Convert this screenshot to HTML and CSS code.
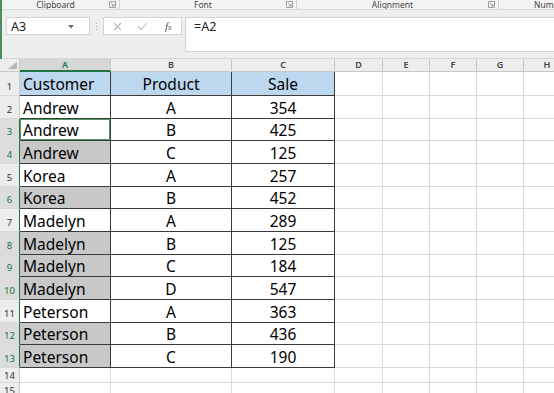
FILE: index.html
```html
<!DOCTYPE html>
<html>
<head>
<meta charset="utf-8">
<link rel="stylesheet" href="styles.css">
</head>
<body>
<div class="top">
  <div class="ribbon">
    <div class="grp g1"><span class="glabel">Clipboard</span><span class="launch"><svg width="7" height="7" viewBox="0 0 7 7"><path d="M0.5 0.5h6v6h-6z" fill="none" stroke="#8a8a8a" stroke-width="0.8"/><path d="M2 2l3 3M5 3v2H3" fill="none" stroke="#8a8a8a" stroke-width="0.8"/></svg></span></div>
    <div class="grp g2"><span class="glabel">Font</span><span class="launch"><svg width="7" height="7" viewBox="0 0 7 7"><path d="M0.5 0.5h6v6h-6z" fill="none" stroke="#8a8a8a" stroke-width="0.8"/><path d="M2 2l3 3M5 3v2H3" fill="none" stroke="#8a8a8a" stroke-width="0.8"/></svg></span></div>
    <div class="grp g3"><span class="glabel">Alignment</span><span class="launch"><svg width="7" height="7" viewBox="0 0 7 7"><path d="M0.5 0.5h6v6h-6z" fill="none" stroke="#8a8a8a" stroke-width="0.8"/><path d="M2 2l3 3M5 3v2H3" fill="none" stroke="#8a8a8a" stroke-width="0.8"/></svg></span></div>
    <div class="grp g4"><span class="glabel4">Number</span></div>
  </div>
  <div class="fbar">
    <div class="namebox"><span>A3</span><svg class="dd" width="6" height="4" viewBox="0 0 6 4"><path d="M0 0h6L3 3.5z" fill="#6a6a6a"/></svg></div>
    <div class="dots"><i></i><i></i><i></i></div>
    <div class="btns">
      <svg width="9" height="9" viewBox="0 0 9 9"><path d="M1 1l7 7M8 1l-7 7" stroke="#b8b8b8" stroke-width="1.1"/></svg>
      <svg width="11" height="9" viewBox="0 0 11 9"><path d="M1 4.5l3 3 6-6.5" fill="none" stroke="#b8b8b8" stroke-width="1.1"/></svg>
      <span class="fx"><i>f</i><span class="x">x</span></span>
    </div>
    <div class="finput">=A2</div>
  </div>
</div>
<div class="sheet">
  <div class="corner"><svg width="9" height="7" viewBox="0 0 9 7"><path d="M9 0v7H0z" fill="#b5b5b5"/></svg></div>
  <div class="ch sel">A</div><div class="ch">B</div><div class="ch">C</div><div class="ch">D</div><div class="ch">E</div><div class="ch">F</div><div class="ch">G</div><div class="ch">H</div>

  <div class="rh">1</div><div class="c t hd l">Customer</div><div class="c t hd m">Product</div><div class="c t hd m">Sale</div><div class="c"></div><div class="c"></div><div class="c"></div><div class="c"></div><div class="c"></div>
  <div class="rh">2</div><div class="c t l">Andrew</div><div class="c t m">A</div><div class="c t m">354</div><div class="c"></div><div class="c"></div><div class="c"></div><div class="c"></div><div class="c"></div>
  <div class="rh rs">3</div><div class="c t l act">Andrew</div><div class="c t m">B</div><div class="c t m">425</div><div class="c"></div><div class="c"></div><div class="c"></div><div class="c"></div><div class="c"></div>
  <div class="rh rs">4</div><div class="c t l gs">Andrew</div><div class="c t m">C</div><div class="c t m">125</div><div class="c"></div><div class="c"></div><div class="c"></div><div class="c"></div><div class="c"></div>
  <div class="rh rl">5</div><div class="c t l">Korea</div><div class="c t m">A</div><div class="c t m">257</div><div class="c"></div><div class="c"></div><div class="c"></div><div class="c"></div><div class="c"></div>
  <div class="rh rs">6</div><div class="c t l gs">Korea</div><div class="c t m">B</div><div class="c t m">452</div><div class="c"></div><div class="c"></div><div class="c"></div><div class="c"></div><div class="c"></div>
  <div class="rh rl">7</div><div class="c t l">Madelyn</div><div class="c t m">A</div><div class="c t m">289</div><div class="c"></div><div class="c"></div><div class="c"></div><div class="c"></div><div class="c"></div>
  <div class="rh rs">8</div><div class="c t l gs">Madelyn</div><div class="c t m">B</div><div class="c t m">125</div><div class="c"></div><div class="c"></div><div class="c"></div><div class="c"></div><div class="c"></div>
  <div class="rh rs">9</div><div class="c t l gs">Madelyn</div><div class="c t m">C</div><div class="c t m">184</div><div class="c"></div><div class="c"></div><div class="c"></div><div class="c"></div><div class="c"></div>
  <div class="rh rs">10</div><div class="c t l gs">Madelyn</div><div class="c t m">D</div><div class="c t m">547</div><div class="c"></div><div class="c"></div><div class="c"></div><div class="c"></div><div class="c"></div>
  <div class="rh rl">11</div><div class="c t l">Peterson</div><div class="c t m">A</div><div class="c t m">363</div><div class="c"></div><div class="c"></div><div class="c"></div><div class="c"></div><div class="c"></div>
  <div class="rh rs">12</div><div class="c t l gs">Peterson</div><div class="c t m">B</div><div class="c t m">436</div><div class="c"></div><div class="c"></div><div class="c"></div><div class="c"></div><div class="c"></div>
  <div class="rh rs">13</div><div class="c t l gs">Peterson</div><div class="c t m">C</div><div class="c t m">190</div><div class="c"></div><div class="c"></div><div class="c"></div><div class="c"></div><div class="c"></div>
  <div class="rh sm">14</div><div class="c"></div><div class="c"></div><div class="c"></div><div class="c"></div><div class="c"></div><div class="c"></div><div class="c"></div><div class="c"></div>
  <div class="rh sm">15</div><div class="c"></div><div class="c"></div><div class="c"></div><div class="c"></div><div class="c"></div><div class="c"></div><div class="c"></div><div class="c"></div>
</div>
</body>
</html>
```

FILE: styles.css
```css
html, body {
  margin: 0;
  padding: 0;
}
body {
  width: 554px;
  height: 393px;
  overflow: hidden;
  background: #ffffff;
  font-family: "Noto Sans", "Liberation Sans", sans-serif;
}
.top {
  background: #eeeeee;
  border-left: 2px solid #4a8f62;
  height: 59px;
  box-sizing: border-box;
}
.ribbon {
  height: 10px;
  display: flex;
  border-bottom: 1px solid #dadada;
  box-sizing: border-box;
  background: #f3f3f3;
  overflow: hidden;
}
.grp {
  display: flex;
  align-items: center;
  box-sizing: border-box;
  height: 9px;
  border-right: 1px solid #d0d0d0;
  flex-shrink: 0;
}
.g1 { width: 118px; }
.g2 { width: 177px; }
.g3 { width: 202px; }
.g4 { flex: 1 1 0; min-width: 0; border-right: none; overflow: hidden; white-space: nowrap; }
.glabel {
  flex: 1;
  text-align: center;
  font-size: 8.5px;
  line-height: 9px;
  color: #444;
}
.glabel4 {
  font-size: 8.5px;
  line-height: 9px;
  color: #444;
  margin-left: 35px;
}
.launch {
  width: 7px;
  height: 7px;
  margin-right: 3px;
  display: flex;
}
.fbar {
  display: flex;
  align-items: flex-start;
  padding-top: 7px;
  padding-left: 4px;
  height: 49px;
  box-sizing: border-box;
  border-bottom: 1px solid #d6d6d6;
}
.namebox {
  width: 84px;
  height: 18px;
  box-sizing: border-box;
  background: #fff;
  border: 1px solid #d4d4d4;
  display: flex;
  align-items: center;
  justify-content: space-between;
  padding: 0 15px 0 4px;
  font-size: 12.5px;
  color: #222;
}
.namebox .dd { margin-top: 1px; }
.dots {
  width: 13px;
  height: 18px;
  display: flex;
  flex-direction: column;
  align-items: center;
  justify-content: center;
  gap: 2px;
}
.dots i {
  display: block;
  width: 1px;
  height: 1px;
  background: #a8a8a8;
}
.btns {
  width: 79px;
  height: 18px;
  box-sizing: border-box;
  background: #fff;
  border: 1px solid #d4d4d4;
  display: flex;
  align-items: center;
  padding-left: 9px;
  gap: 15px;
}
.fx {
  font-family: "Liberation Serif", serif;
  color: #555;
  font-size: 11px;
  margin-left: 2px;
}
.fx i { font-style: italic; }
.fx .x { font-style: italic; font-size: 8px; }
.finput {
  margin-left: 3px;
  flex: 1;
  height: 35px;
  box-sizing: border-box;
  background: #fff;
  border: 1px solid #d4d4d4;
  border-right: none;
  font-size: 12.5px;
  color: #222;
  padding: 1px 0 0 8px;
  line-height: 15px;
}
.sheet {
  display: grid;
  grid-template-columns: 20px 91px 121px 103px 48px 47px 47px 47px 47px;
  grid-template-rows: 13px 24px repeat(12, 22.67px) 15px 15px;
  width: 571px;
}
.corner {
  background: #ededed;
  border-right: 1px solid #c8c8c8;
  border-bottom: 1px solid #c8c8c8;
  box-sizing: border-box;
  display: flex;
  justify-content: flex-end;
  align-items: flex-end;
  padding: 0 2px 2px 0;
}
.ch {
  background: #ededed;
  border-right: 1px solid #c8c8c8;
  border-bottom: 1px solid #c8c8c8;
  box-sizing: border-box;
  font-size: 9px;
  font-weight: 600;
  color: #444;
  display: flex;
  align-items: center;
  justify-content: center;
  line-height: 12px;
}
.ch.sel {
  background: #d6d6d6;
  color: #217346;
  border-bottom: 2px solid #217346;
}
.rh {
  background: #ededed;
  border-right: 1px solid #c8c8c8;
  border-bottom: 1px solid #d8d8d8;
  box-sizing: border-box;
  font-size: 9.5px;
  color: #333;
  display: flex;
  align-items: flex-end;
  justify-content: center;
  padding-bottom: 3px;
  line-height: 11px;
}
.rh.rs {
  background: #dcdcdc;
  color: #217346;
  border-right: 1px solid #217346;
}
.rh.rl {
  border-right: 1px solid #217346;
}
.rh.sm {
  padding-bottom: 1px;
}
.c {
  border-right: 1px solid #dadada;
  border-bottom: 1px solid #dadada;
  box-sizing: border-box;
  background: #fff;
}
.c.t {
  border-right: 1px solid #3a3a3a;
  border-bottom: 1px solid #3a3a3a;
  font-family: "Noto Sans", "Liberation Sans", sans-serif;
  font-size: 15.5px;
  line-height: 18px;
  color: #000;
  display: flex;
  align-items: flex-end;
  padding-bottom: 1px;
}
.c.hd { background: #bdd7ee; padding-bottom: 2px; }
.c.l { padding-left: 3px; }
.c.m { justify-content: center; }
.c.gs { background: #c8c8c8; }
.c.act { box-shadow: inset 0 0 0 1px #4f9a68, inset 0 0 0 2px #ffffff; }
```
